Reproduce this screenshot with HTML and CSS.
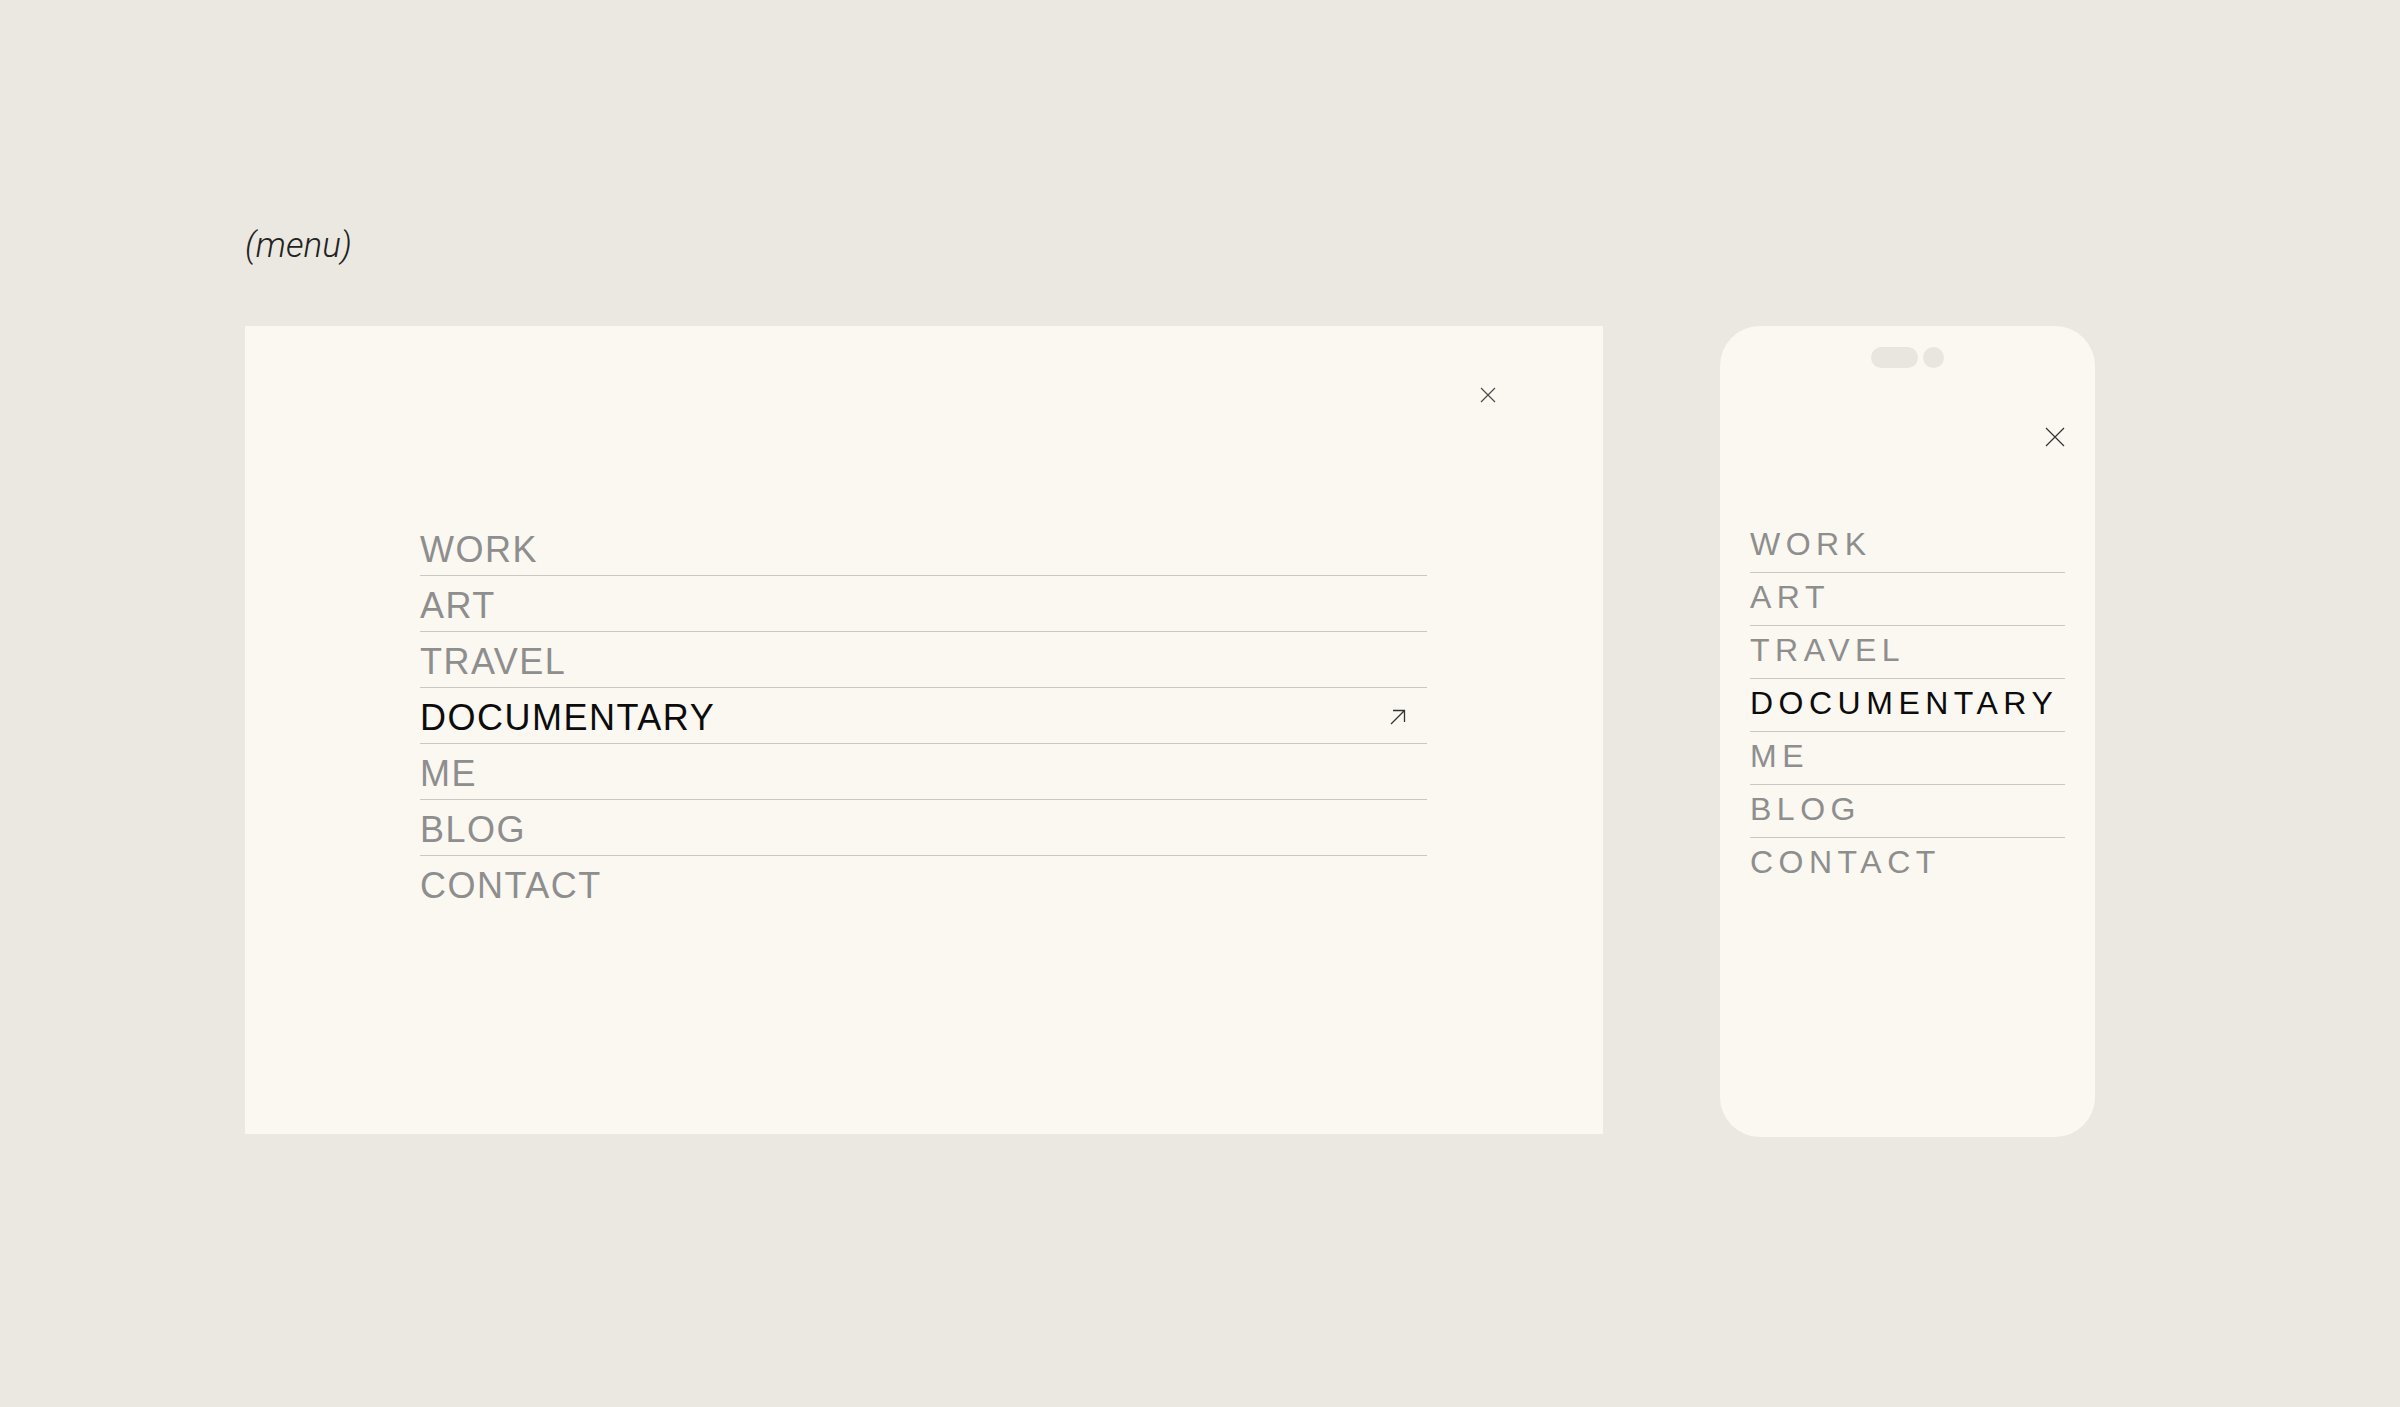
FILE: index.html
```html
<!DOCTYPE html>
<html lang="en">
<head>
    <meta charset="UTF-8">
    <meta name="viewport" content="width=device-width, initial-scale=1.0">
    <title>Menu</title>
    <link rel="stylesheet" href="styles.css">
</head>
<body>
    <div class="page">
        <div class="label">(menu)</div>

        <div class="screens">
            <!-- desktop menu -->
            <div class="desk">
                <div class="desk-head">
                    <button class="close" aria-label="Close">
                        <svg width="16" height="16" viewBox="0 0 16 16">
                            <path d="M1 1L15 15M15 1L1 15" stroke="#4a4a4a" stroke-width="1.2" fill="none"/>
                        </svg>
                    </button>
                </div>
                <ul class="desk-nav">
                    <li class="nav-item">WORK</li>
                    <li class="nav-item">ART</li>
                    <li class="nav-item">TRAVEL</li>
                    <li class="nav-item active">
                        <span>DOCUMENTARY</span>
                        <svg class="arrow" width="16" height="16" viewBox="0 0 16 16">
                            <path d="M1 15L14.5 1.5M3 1.5H14.5V13" stroke="#333" stroke-width="1.3" fill="none"/>
                        </svg>
                    </li>
                    <li class="nav-item">ME</li>
                    <li class="nav-item">BLOG</li>
                    <li class="nav-item">CONTACT</li>
                </ul>
            </div>

            <!-- mobile menu -->
            <div class="phone">
                <div class="notch">
                    <span class="pill"></span>
                    <span class="dot"></span>
                </div>
                <div class="phone-head">
                    <button class="close" aria-label="Close">
                        <svg width="20" height="20" viewBox="0 0 20 20">
                            <path d="M1 1L19 19M19 1L1 19" stroke="#333" stroke-width="1.2" fill="none"/>
                        </svg>
                    </button>
                </div>
                <ul class="phone-nav">
                    <li class="nav-item">WORK</li>
                    <li class="nav-item">ART</li>
                    <li class="nav-item">TRAVEL</li>
                    <li class="nav-item active">DOCUMENTARY</li>
                    <li class="nav-item">ME</li>
                    <li class="nav-item">BLOG</li>
                    <li class="nav-item">CONTACT</li>
                </ul>
            </div>
        </div>
    </div>
</body>
</html>
```

FILE: styles.css
```css
body {
    margin: 0;
    background-color: #ebe8e1;
    font-family: "Liberation Sans", Arial, sans-serif;
    color: #8e8e8e;
}

.page {
    padding: 222px 0 0 245px;
}

.label {
    font-family: Roboto, "Liberation Sans", sans-serif;
    font-style: italic;
    font-weight: 300;
    font-size: 35px;
    line-height: 48px;
    color: #222;
}

.screens {
    display: flex;
    align-items: flex-start;
    gap: 117px;
    margin-top: 56px;
}

.close {
    display: block;
    padding: 0;
    border: 0;
    background: none;
    cursor: pointer;
}

.close svg {
    display: block;
}

ul {
    list-style: none;
    margin: 0;
    padding: 0;
}

.nav-item {
    display: flex;
    justify-content: space-between;
    align-items: center;
    border-bottom: 1px solid #c9c8c3;
}

.nav-item:last-child {
    border-bottom: 0;
}

.nav-item.active {
    color: #0c0c0c;
}

/* desktop */

.desk {
    width: 1358px;
    height: 808px;
    box-sizing: border-box;
    padding-top: 61px;
    background-color: #faf8f1;
}

.desk-head {
    display: flex;
    justify-content: flex-end;
    padding-right: 107px;
}

.desk-nav {
    margin: 117px 176px 0 175px;
}

.desk-nav .nav-item {
    font-size: 36px;
    letter-spacing: 1.5px;
    line-height: 40px;
    padding: 10px 0 5px;
}

.arrow {
    margin: 0 21px 3px 0;
}

/* phone */

.phone {
    width: 375px;
    height: 811px;
    box-sizing: border-box;
    padding: 21px 30px 0;
    border-radius: 40px;
    background-color: #faf8f1;
}

.notch {
    display: flex;
    justify-content: center;
    gap: 5px;
}

.pill {
    width: 47px;
    height: 21px;
    border-radius: 11px;
    background-color: #e9e6df;
}

.dot {
    width: 21px;
    height: 21px;
    border-radius: 50%;
    background-color: #e9e6df;
}

.phone-head {
    display: flex;
    justify-content: flex-end;
    margin-top: 59px;
}

.phone-nav {
    margin-top: 73px;
}

.phone-nav .nav-item {
    font-size: 32px;
    letter-spacing: 5.5px;
    line-height: 36px;
    padding: 6px 0 10px;
}
```
